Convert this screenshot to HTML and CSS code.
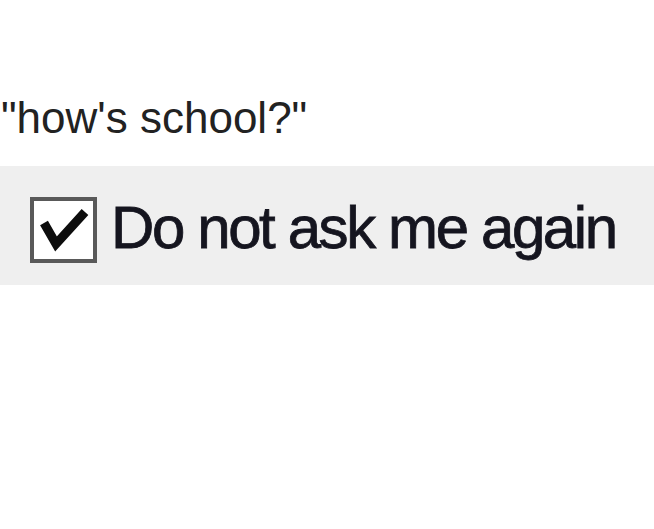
FILE: index.html
```html
<!DOCTYPE html>
<html lang="en">
<head>
    <meta charset="UTF-8">
    <meta name="viewport" content="width=device-width, initial-scale=1.0">
    <title>how's school?</title>
    <link rel="stylesheet" href="styles.css">
</head>
<body>
    <p class="question">"how's school?"</p>
    <div class="dialog-bar">
        <label class="check-row">
            <span class="check-box">
                <svg width="59" height="58" viewBox="0 0 59 58">
                    <path d="M10 22 L22 43 L51 11" fill="none" stroke="#0d0d0d" stroke-width="9" stroke-linejoin="miter"/>
                </svg>
            </span>
            <span class="check-text">Do not ask me again</span>
        </label>
    </div>
</body>
</html>
```

FILE: styles.css
```css
*{
    margin: 0;
    padding: 0;
}

body{
    background-color: #fff;
    font-family: "Liberation Sans", Arial, sans-serif;
}

.question{
    padding: 93px 0 0 1px;
    font-size: 44px;
    line-height: 50px;
    color: #222;
}

.dialog-bar{
    margin-top: 23px;
    height: 119px;
    box-sizing: border-box;
    padding: 27px 0 0 30px;
    background-color: #efefef;
}

.check-row{
    display: flex;
    align-items: flex-start;
}

.check-box{
    display: block;
    width: 59px;
    height: 58px;
    margin-top: 4px;
    border: 4px solid #595959;
    background-color: #fff;
}
.check-box svg{
    display: block;
}

/* scaled-up dialog font, a little heavier than plain Arial */
.check-text{
    margin-left: 14px;
    font-size: 60px;
    line-height: 70px;
    letter-spacing: -2.4px;
    color: #15151f;
    -webkit-text-stroke: 0.8px #15151f;
}
```
